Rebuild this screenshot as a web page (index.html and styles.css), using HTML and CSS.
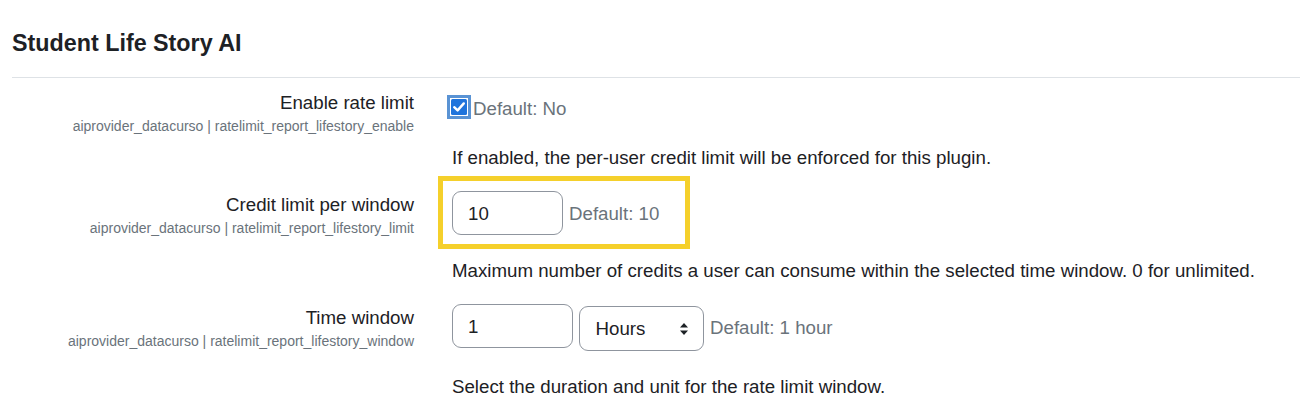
FILE: index.html
```html
<!DOCTYPE html>
<html lang="en">
<head>
<meta charset="utf-8">
<title>Student Life Story AI</title>
<link rel="stylesheet" href="styles.css">
</head>
<body>
<div class="page">
  <h3 class="section-title">Student Life Story AI</h3>
  <hr class="rule">

  <div class="setting setting-first">
    <div class="setting-label">
      <div class="label-main">Enable rate limit</div>
      <div class="label-key">aiprovider_datacurso | ratelimit_report_lifestory_enable</div>
    </div>
    <div class="setting-control control-check">
      <div class="control-line">
        <span class="checkbox">
          <svg width="24" height="24" viewBox="0 0 24 24">
            <rect x="0" y="0" width="24" height="24" fill="#5a93d4"/>
            <rect x="3" y="3" width="18" height="18" fill="#ffffff"/>
            <rect x="4" y="4" width="16" height="16" rx="1.5" fill="#1f74dc"/>
            <path d="M7.2 12.2 L10.6 15.4 L16.8 8.4" fill="none" stroke="#ffffff" stroke-width="2.4" stroke-linecap="round" stroke-linejoin="round"/>
          </svg>
        </span>
        <span class="default">Default: No</span>
      </div>
      <div class="description">If enabled, the per-user credit limit will be enforced for this plugin.</div>
    </div>
  </div>

  <div class="setting">
    <div class="setting-label">
      <div class="label-main">Credit limit per window</div>
      <div class="label-key">aiprovider_datacurso | ratelimit_report_lifestory_limit</div>
    </div>
    <div class="setting-control">
      <div class="control-line">
        <div class="highlight">
          <div class="text-input input-short">10</div>
          <span class="default">Default: 10</span>
        </div>
      </div>
      <div class="description">Maximum number of credits a user can consume within the selected time window. 0 for unlimited.</div>
    </div>
  </div>

  <div class="setting">
    <div class="setting-label">
      <div class="label-main">Time window</div>
      <div class="label-key">aiprovider_datacurso | ratelimit_report_lifestory_window</div>
    </div>
    <div class="setting-control">
      <div class="control-line">
        <div class="text-input input-medium">1</div>
        <div class="select-box">
          <span>Hours</span>
          <svg class="select-arrows" width="10" height="14" viewBox="0 0 10 14">
            <path d="M1 5.5 L5 1 L9 5.5 Z" fill="#1d2125"/>
            <path d="M1 8.5 L5 13 L9 8.5 Z" fill="#1d2125"/>
          </svg>
        </div>
        <span class="default">Default: 1 hour</span>
      </div>
      <div class="description">Select the duration and unit for the rate limit window.</div>
    </div>
  </div>
</div>
</body>
</html>
```

FILE: styles.css
```css
* {
  box-sizing: border-box;
}

html, body {
  margin: 0;
  padding: 0;
  background: #ffffff;
}

body {
  font-family: "Liberation Sans", Arial, sans-serif;
  font-size: 18.7px;
  line-height: 27px;
  color: #1d2125;
}

.page {
  padding: 29px 1px 0 12px;
}

.section-title {
  margin: 0;
  font-size: 23.3px;
  line-height: 28px;
  font-weight: 700;
  color: #1d2125;
}

.rule {
  margin: 20px 0 0 0;
  border: 0;
  border-top: 1px solid #dee2e6;
  height: 0;
}

.setting {
  display: grid;
  grid-template-columns: 402px 1fr;
  column-gap: 38px;
  margin-top: 20.5px;
}

.setting-first {
  margin-top: 11px;
}

.setting-label {
  text-align: right;
}

.label-main {
  line-height: 27px;
}

.label-key {
  font-size: 14px;
  line-height: 21.6px;
  color: #6a737b;
}

.control-check {
  padding-top: 5.5px;
}

.control-line {
  display: flex;
  align-items: flex-start;
  gap: 6px;
}

.control-check .control-line {
  gap: 2px;
}

.checkbox {
  display: block;
  width: 24px;
  height: 24px;
  margin-left: -5px;
}

.checkbox svg {
  display: block;
}

.default {
  color: #6a737b;
  line-height: 27px;
}

.control-check .default {
  margin-top: 0.5px;
}

.highlight {
  display: flex;
  align-items: center;
  gap: 6px;
  border: 5px solid #f5d02b;
  padding: 10px 26px 9px 9px;
  margin: -15px 0 -14px -14px;
}

.text-input {
  height: 44px;
  border: 1px solid #8f959e;
  border-radius: 9px;
  padding: 7.5px 15px;
  line-height: 27px;
  color: #1d2125;
}

.input-short {
  width: 111px;
}

.input-medium {
  width: 121px;
}

.control-line .default {
  align-self: center;
}

.control-check .default {
  align-self: flex-start;
}

.select-box {
  width: 125px;
  height: 45px;
  margin-top: 2px;
  border: 1px solid #8f959e;
  border-radius: 9px;
  padding: 8px 15px 8px 15.5px;
  display: flex;
  align-items: center;
  justify-content: space-between;
  color: #1d2125;
}

.select-arrows {
  display: block;
  margin-right: -1px;
}

.description {
  margin-top: 21.5px;
  line-height: 27px;
}
```
